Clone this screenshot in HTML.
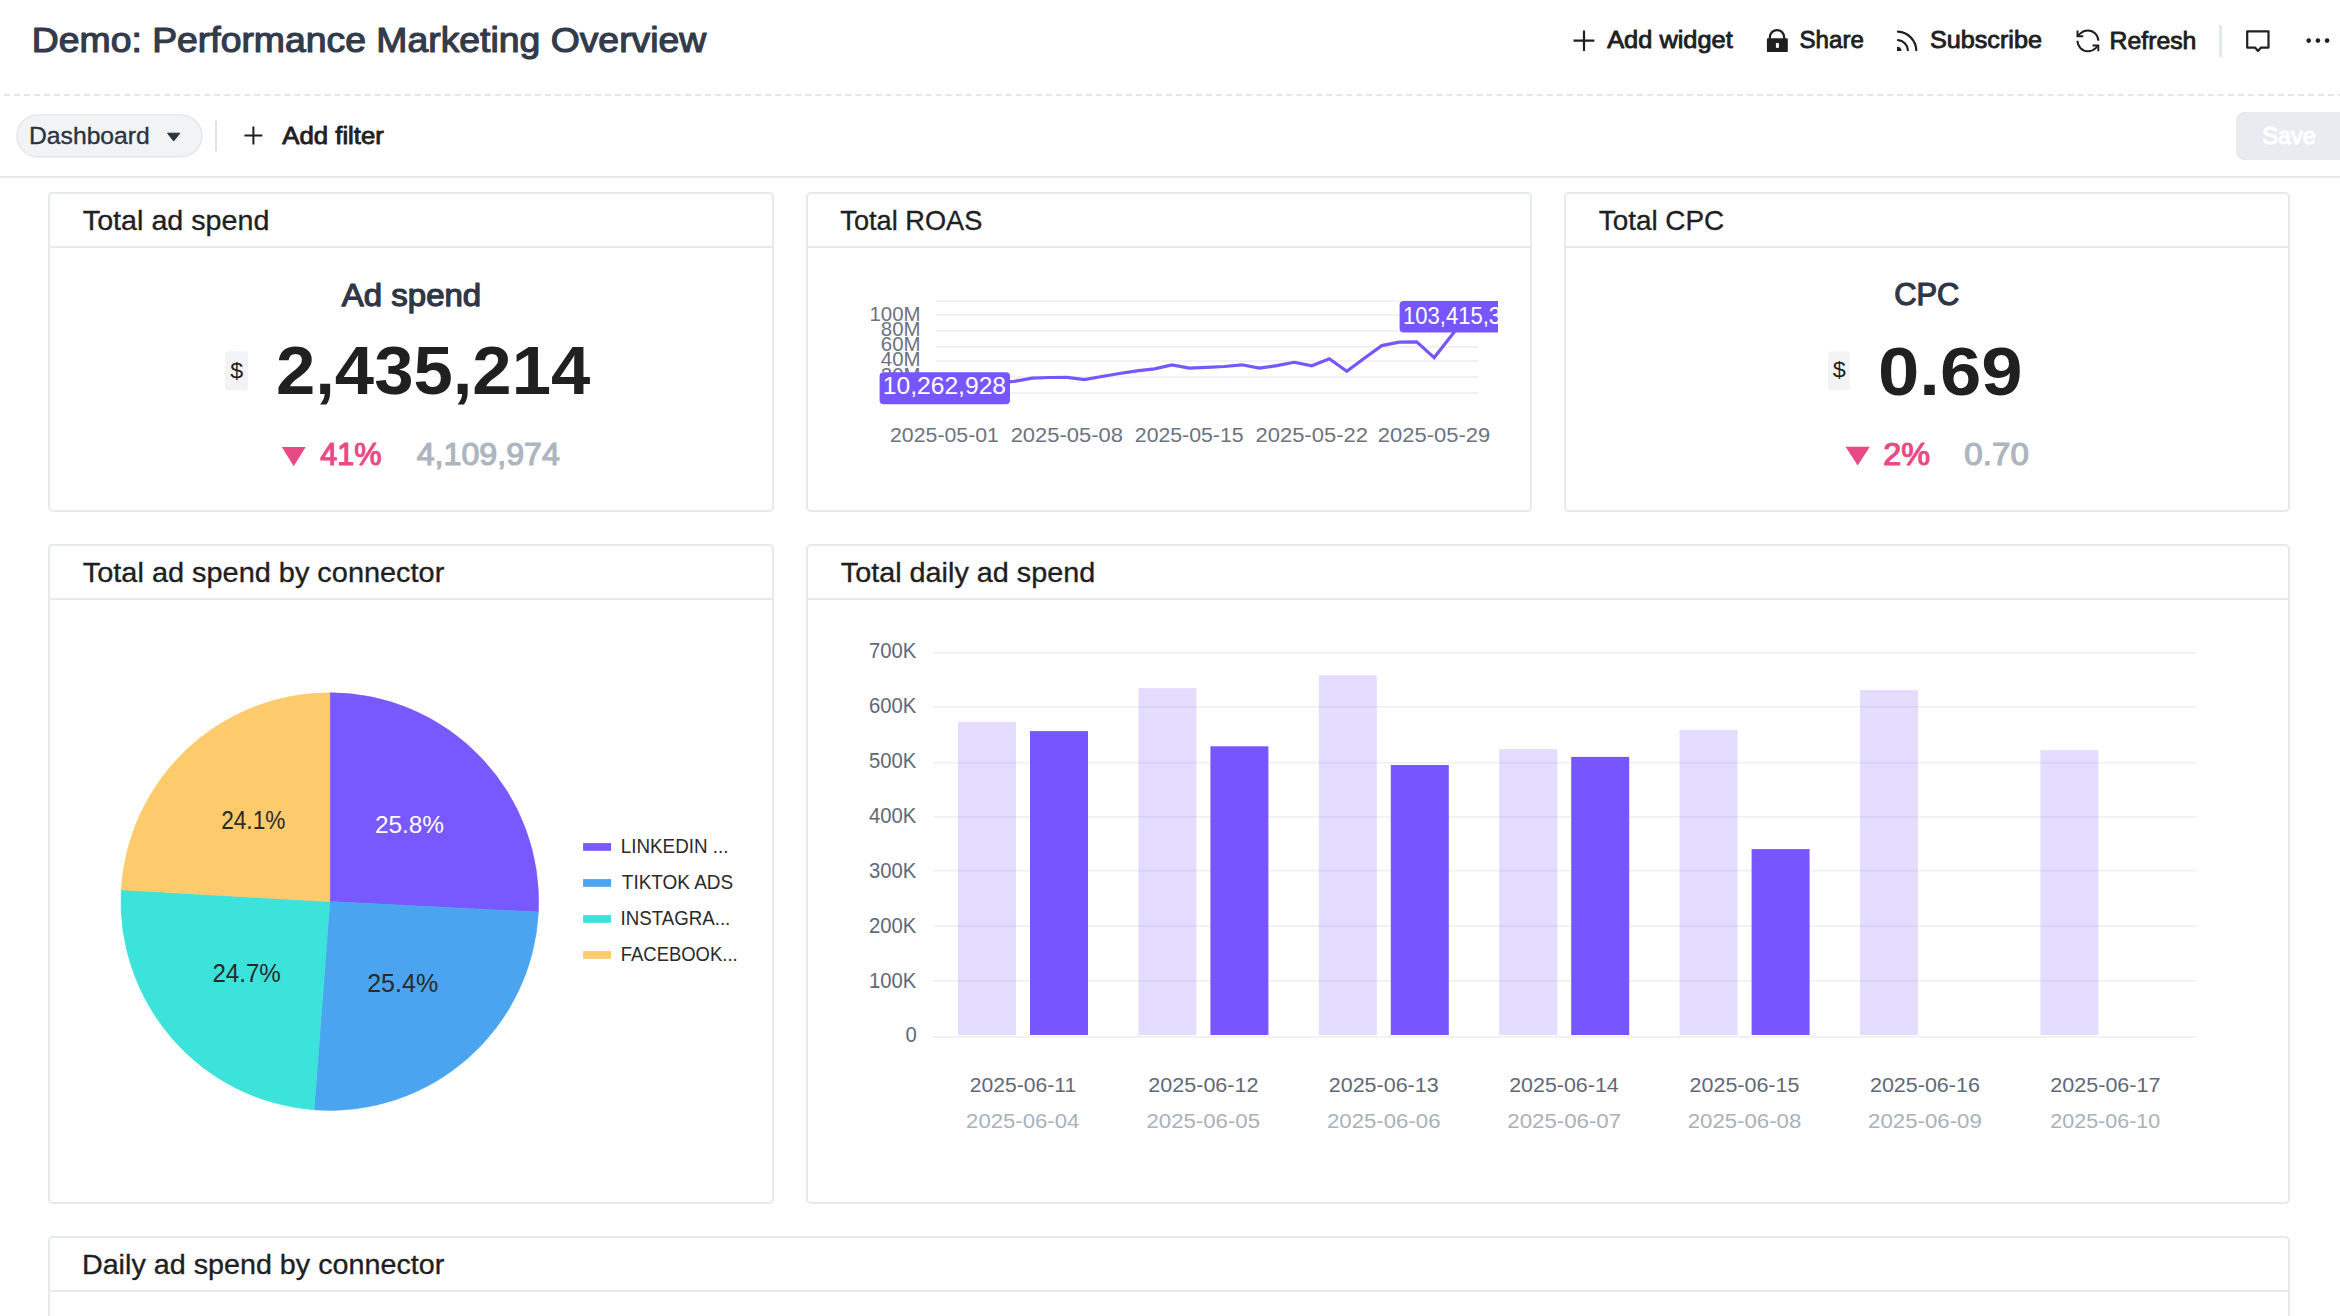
<!DOCTYPE html>
<html><head><meta charset="utf-8"><title>Demo: Performance Marketing Overview</title>
<style>
html,body{margin:0;padding:0;background:#fff;overflow:hidden;}
body{font-family:"Liberation Sans",sans-serif;}
svg{display:block;width:100%;height:auto;}
text{font-family:"Liberation Sans",sans-serif;}
</style></head><body>
<svg width="2340" height="1316" viewBox="0 0 2340 1316">
<text x="31.82" y="52.40" font-size="35.47" textLength="674.47" lengthAdjust="spacingAndGlyphs" fill="#333b4a" stroke="#333b4a" stroke-width="1.2" stroke-linejoin="round">Demo: Performance Marketing Overview</text>
<path d="M1584 30.5V51M1573.5 40.7H1594.4" stroke="#1f1f1f" stroke-width="2.2" fill="none"/>
<text x="1607.16" y="48.28" font-size="23.04" textLength="125.61" lengthAdjust="spacingAndGlyphs" fill="#1f1f1f" stroke="#1f1f1f" stroke-width="0.85" stroke-linejoin="round">Add widget</text>
<path d="M1769.9 38.8V37.1a7.1 7.1 0 0 1 14.2 0V38.8" stroke="#1f1f1f" stroke-width="2.2" fill="none"/>
<rect x="1766.9" y="38.3" width="20.9" height="13.8" rx="1.2" fill="#1f1f1f"/>
<rect x="1775.9" y="43.1" width="3" height="4.7" fill="#fff"/>
<text x="1799.54" y="48.48" font-size="23.62" textLength="64.28" lengthAdjust="spacingAndGlyphs" fill="#1f1f1f" stroke="#1f1f1f" stroke-width="0.85" stroke-linejoin="round">Share</text>
<path d="M1897 51.1V46.7A4.6 4.6 0 0 1 1901.6 51.1Z" fill="#1f1f1f"/>
<path d="M1898 40.1A10.9 10.9 0 0 1 1907.9 50.1M1898 31.7A19.3 19.3 0 0 1 1916.3 50.1" stroke="#1f1f1f" stroke-width="2.2" fill="none" stroke-linecap="round"/>
<text x="1929.99" y="48.28" font-size="23.04" textLength="111.90" lengthAdjust="spacingAndGlyphs" fill="#1f1f1f" stroke="#1f1f1f" stroke-width="0.85" stroke-linejoin="round">Subscribe</text>
<g transform="translate(2074.03 27.0) scale(1.156)" stroke="#1f1f1f" stroke-width="1.69" fill="none" stroke-linecap="butt" stroke-linejoin="miter"><path d="M21 12a9 9 0 0 0-9-9 9.75 9.75 0 0 0-6.74 2.74L3 8"/><path d="M3 3v5h5"/><path d="M3 12a9 9 0 0 0 9 9 9.75 9.75 0 0 0 6.74-2.74L21 16"/><path d="M16 16h5v5"/></g>
<text x="2109.58" y="48.58" font-size="23.47" textLength="86.85" lengthAdjust="spacingAndGlyphs" fill="#1f1f1f" stroke="#1f1f1f" stroke-width="0.85" stroke-linejoin="round">Refresh</text>
<rect x="2219" y="25" width="3" height="32" fill="#e3e8ef"/>
<path d="M2247.2 31.3H2268.5V47.6H2261L2258 51L2255 47.6H2247.2Z" stroke="#1f1f1f" stroke-width="2.2" fill="none" stroke-linejoin="round"/>
<circle cx="2308.7" cy="40.6" r="2.3" fill="#1f1f1f"/>
<circle cx="2317.9" cy="40.6" r="2.3" fill="#1f1f1f"/>
<circle cx="2327.1" cy="40.6" r="2.3" fill="#1f1f1f"/>
<line x1="4" y1="95" x2="2340" y2="95" stroke="#e3e7ec" stroke-width="2" stroke-dasharray="6.01 4.0074"/>
<rect x="16.9" y="114.9" width="185" height="41.8" rx="20.9" fill="#f1f3f5" stroke="#e3e7eb" stroke-width="1.5"/>
<text x="28.94" y="143.92" font-size="23.76" textLength="120.89" lengthAdjust="spacingAndGlyphs" fill="#2b3340" stroke="#2b3340" stroke-width="0.35" stroke-linejoin="round">Dashboard</text>
<path d="M167.5 133.2H179.8L173.65 141Z" fill="#2b3340" stroke="#2b3340" stroke-width="1" stroke-linejoin="round"/>
<rect x="215" y="120.5" width="2" height="31" fill="#dfe4ea"/>
<path d="M253.4 126.5V144.4M244.4 135.5H262.4" stroke="#1f1f1f" stroke-width="2" fill="none"/>
<text x="282.36" y="143.67" font-size="23.04" textLength="101.44" lengthAdjust="spacingAndGlyphs" fill="#1f1f1f" stroke="#1f1f1f" stroke-width="0.85" stroke-linejoin="round">Add filter</text>
<rect x="2236" y="112" width="140" height="48" rx="8" fill="#e8ecf1"/>
<text x="2262.29" y="143.75" font-size="23.84" textLength="53.60" lengthAdjust="spacingAndGlyphs" fill="#ffffff" stroke="#ffffff" stroke-width="1.1" stroke-linejoin="round">Save</text>
<rect x="0" y="176" width="2340" height="2" fill="#e6eaef"/>
<rect x="49" y="193" width="724" height="318" rx="4" fill="#fff" stroke="#e6eaef" stroke-width="2"/>
<rect x="49" y="246" width="724" height="2" fill="#e6eaef"/>
<text x="82.83" y="229.82" font-size="28.56" textLength="186.59" lengthAdjust="spacingAndGlyphs" fill="#1f1f1f" stroke="#1f1f1f" stroke-width="0.35" stroke-linejoin="round">Total ad spend</text>
<rect x="807" y="193" width="724" height="318" rx="4" fill="#fff" stroke="#e6eaef" stroke-width="2"/>
<rect x="807" y="246" width="724" height="2" fill="#e6eaef"/>
<text x="840.36" y="229.82" font-size="28.56" textLength="141.93" lengthAdjust="spacingAndGlyphs" fill="#1f1f1f" stroke="#1f1f1f" stroke-width="0.35" stroke-linejoin="round">Total ROAS</text>
<rect x="1565" y="193" width="724" height="318" rx="4" fill="#fff" stroke="#e6eaef" stroke-width="2"/>
<rect x="1565" y="246" width="724" height="2" fill="#e6eaef"/>
<text x="1598.75" y="229.82" font-size="28.56" textLength="125.47" lengthAdjust="spacingAndGlyphs" fill="#1f1f1f" stroke="#1f1f1f" stroke-width="0.35" stroke-linejoin="round">Total CPC</text>
<rect x="49" y="545" width="724" height="658" rx="4" fill="#fff" stroke="#e6eaef" stroke-width="2"/>
<rect x="49" y="598" width="724" height="2" fill="#e6eaef"/>
<text x="82.82" y="581.83" font-size="28.56" textLength="361.47" lengthAdjust="spacingAndGlyphs" fill="#1f1f1f" stroke="#1f1f1f" stroke-width="0.35" stroke-linejoin="round">Total ad spend by connector</text>
<rect x="807" y="545" width="1482" height="658" rx="4" fill="#fff" stroke="#e6eaef" stroke-width="2"/>
<rect x="807" y="598" width="1482" height="2" fill="#e6eaef"/>
<text x="840.83" y="581.83" font-size="28.56" textLength="254.36" lengthAdjust="spacingAndGlyphs" fill="#1f1f1f" stroke="#1f1f1f" stroke-width="0.35" stroke-linejoin="round">Total daily ad spend</text>
<rect x="49" y="1237" width="2240" height="162" rx="4" fill="#fff" stroke="#e6eaef" stroke-width="2"/>
<rect x="49" y="1290" width="2240" height="2" fill="#e6eaef"/>
<text x="81.91" y="1273.83" font-size="28.56" textLength="362.39" lengthAdjust="spacingAndGlyphs" fill="#1f1f1f" stroke="#1f1f1f" stroke-width="0.35" stroke-linejoin="round">Daily ad spend by connector</text>
<text x="341.84" y="305.57" font-size="31.47" textLength="139.32" lengthAdjust="spacingAndGlyphs" fill="#2f3747" stroke="#2f3747" stroke-width="1.25" stroke-linejoin="round">Ad spend</text>
<rect x="225" y="351.2" width="23" height="39.3" rx="3" fill="#f1f3f5"/>
<text x="230.27" y="377.50" font-size="21.80" textLength="12.91" lengthAdjust="spacingAndGlyphs" fill="#1f1f1f">$</text>
<text x="275.93" y="394.40" font-size="69.04" font-weight="700" textLength="314.33" lengthAdjust="spacingAndGlyphs" fill="#202020">2,435,214</text>
<path d="M281.8 446.9H305.7L293.75 466.2Z" fill="#e84a85"/>
<text x="320.19" y="465.12" font-size="30.60" textLength="61.36" lengthAdjust="spacingAndGlyphs" fill="#e84a85" stroke="#e84a85" stroke-width="1.15" stroke-linejoin="round">41%</text>
<text x="416.65" y="465.12" font-size="30.60" textLength="143.31" lengthAdjust="spacingAndGlyphs" fill="#adb5bf" stroke="#adb5bf" stroke-width="1.15" stroke-linejoin="round">4,109,974</text>
<text x="1894.28" y="305.27" font-size="30.45" textLength="65.09" lengthAdjust="spacingAndGlyphs" fill="#2f3747" stroke="#2f3747" stroke-width="1.25" stroke-linejoin="round">CPC</text>
<rect x="1828" y="351.4" width="21.8" height="38.9" rx="3" fill="#f1f3f5"/>
<text x="1832.77" y="377.30" font-size="21.80" textLength="13.01" lengthAdjust="spacingAndGlyphs" fill="#1f1f1f">$</text>
<text x="1878.03" y="394.50" font-size="69.19" font-weight="700" textLength="144.47" lengthAdjust="spacingAndGlyphs" fill="#202020">0.69</text>
<path d="M1845.6 446.8H1869.8L1857.7 465.6Z" fill="#e84a85"/>
<text x="1883.36" y="465.12" font-size="30.60" textLength="46.79" lengthAdjust="spacingAndGlyphs" fill="#e84a85" stroke="#e84a85" stroke-width="1.15" stroke-linejoin="round">2%</text>
<text x="1964.35" y="465.12" font-size="30.60" textLength="64.46" lengthAdjust="spacingAndGlyphs" fill="#adb5bf" stroke="#adb5bf" stroke-width="1.15" stroke-linejoin="round">0.70</text>
<rect x="936" y="300.1" width="542" height="1.8" fill="#eff1f4"/>
<rect x="936" y="314.1" width="542" height="1.8" fill="#eff1f4"/>
<rect x="936" y="330.1" width="542" height="1.8" fill="#eff1f4"/>
<rect x="936" y="346.1" width="542" height="1.8" fill="#eff1f4"/>
<rect x="936" y="360.1" width="542" height="1.8" fill="#eff1f4"/>
<rect x="936" y="376.1" width="542" height="1.8" fill="#eff1f4"/>
<rect x="936" y="392.1" width="542" height="1.8" fill="#eff1f4"/>
<text x="869.50" y="320.80" font-size="19.48" textLength="51.01" lengthAdjust="spacingAndGlyphs" fill="#6b7280">100M</text>
<text x="880.82" y="336.30" font-size="19.48" textLength="39.67" lengthAdjust="spacingAndGlyphs" fill="#6b7280">80M</text>
<text x="880.82" y="351.40" font-size="19.48" textLength="39.67" lengthAdjust="spacingAndGlyphs" fill="#6b7280">60M</text>
<text x="880.82" y="366.40" font-size="19.48" textLength="39.67" lengthAdjust="spacingAndGlyphs" fill="#6b7280">40M</text>
<text x="880.82" y="381.50" font-size="19.48" textLength="39.67" lengthAdjust="spacingAndGlyphs" fill="#6b7280">20M</text>
<clipPath id="roasclip"><rect x="820" y="250" width="678" height="250"/></clipPath>
<g clip-path="url(#roasclip)">
<polyline points="944.5,385.1 962.0,384.2 979.5,383.3 997.0,382.4 1014.5,381.4 1032.0,378.1 1049.4,377.5 1066.9,377.3 1084.4,379.6 1101.9,376.5 1119.4,373.5 1136.9,370.8 1154.4,368.8 1171.9,365.0 1189.4,368.1 1206.8,367.3 1224.3,366.5 1241.8,364.8 1259.3,368.1 1276.8,365.6 1294.3,362.3 1311.8,365.8 1329.3,358.8 1346.8,371.2 1364.3,358.2 1381.8,345.6 1399.2,342.2 1416.7,341.8 1434.2,357.6 1451.7,335.3 1469.2,313.6" fill="none" stroke="#7856ff" stroke-width="3.2" stroke-linejoin="miter"/>
<rect x="879.6" y="372.3" width="130.4" height="31.9" rx="4" fill="#7856ff"/>
<text x="882.75" y="394.20" font-size="23.26" textLength="123.30" lengthAdjust="spacingAndGlyphs" fill="#fff">10,262,928</text>
<rect x="1399.6" y="301" width="130.4" height="31.6" rx="4" fill="#7856ff"/>
<text x="1402.95" y="324.10" font-size="24.56" textLength="122.69" lengthAdjust="spacingAndGlyphs" fill="#fff">103,415,394</text>
</g>
<text x="890.04" y="441.80" font-size="20.06" textLength="108.88" lengthAdjust="spacingAndGlyphs" fill="#6b7280">2025-05-01</text>
<text x="1010.65" y="441.80" font-size="20.06" textLength="112.34" lengthAdjust="spacingAndGlyphs" fill="#6b7280">2025-05-08</text>
<text x="1134.84" y="441.80" font-size="20.06" textLength="108.72" lengthAdjust="spacingAndGlyphs" fill="#6b7280">2025-05-15</text>
<text x="1255.45" y="441.80" font-size="20.06" textLength="112.51" lengthAdjust="spacingAndGlyphs" fill="#6b7280">2025-05-22</text>
<text x="1377.85" y="441.80" font-size="20.06" textLength="112.40" lengthAdjust="spacingAndGlyphs" fill="#6b7280">2025-05-29</text>
<path d="M329.8 901.6L329.80 692.80A208.8 208.8 0 0 1 538.34 912.09Z" fill="#7858ff" stroke="#7858ff" stroke-width="0.6"/>
<path d="M329.8 901.6L538.34 912.09A208.8 208.8 0 0 1 314.07 1109.81Z" fill="#4ba4f0" stroke="#4ba4f0" stroke-width="0.6"/>
<path d="M329.8 901.6L314.07 1109.81A208.8 208.8 0 0 1 121.33 889.80Z" fill="#3ce3da" stroke="#3ce3da" stroke-width="0.6"/>
<path d="M329.8 901.6L121.33 889.80A208.8 208.8 0 0 1 329.80 692.80Z" fill="#fdca6c" stroke="#fdca6c" stroke-width="0.6"/>
<text x="374.88" y="832.90" font-size="24.42" textLength="69.19" lengthAdjust="spacingAndGlyphs" fill="#ffffff">25.8%</text>
<text x="221.17" y="829.40" font-size="25.87" textLength="64.24" lengthAdjust="spacingAndGlyphs" fill="#2a2a2a">24.1%</text>
<text x="212.39" y="981.80" font-size="24.85" textLength="68.47" lengthAdjust="spacingAndGlyphs" fill="#2a2a2a">24.7%</text>
<text x="367.15" y="992.30" font-size="25.00" textLength="71.04" lengthAdjust="spacingAndGlyphs" fill="#2a2a2a">25.4%</text>
<rect x="583.1" y="843.1" width="28" height="7.7" fill="#7858ff"/>
<text x="620.75" y="853.10" font-size="20.78" textLength="107.77" lengthAdjust="spacingAndGlyphs" fill="#2a2a2a">LINKEDIN ...</text>
<rect x="583.1" y="879.1" width="28" height="7.7" fill="#4ba4f0"/>
<text x="621.87" y="889.10" font-size="20.78" textLength="111.32" lengthAdjust="spacingAndGlyphs" fill="#2a2a2a">TIKTOK ADS</text>
<rect x="583.1" y="915.1" width="28" height="7.7" fill="#3ce3da"/>
<text x="620.57" y="925.10" font-size="20.78" textLength="109.73" lengthAdjust="spacingAndGlyphs" fill="#2a2a2a">INSTAGRA...</text>
<rect x="583.1" y="951.1" width="28" height="7.7" fill="#fdca6c"/>
<text x="620.78" y="961.10" font-size="20.78" textLength="116.88" lengthAdjust="spacingAndGlyphs" fill="#2a2a2a">FACEBOOK...</text>
<rect x="933" y="651.8" width="1263" height="1.8" fill="#eff1f4"/>
<rect x="933" y="705.9" width="1263" height="1.8" fill="#eff1f4"/>
<rect x="933" y="761.8" width="1263" height="1.8" fill="#eff1f4"/>
<rect x="933" y="815.9" width="1263" height="1.8" fill="#eff1f4"/>
<rect x="933" y="869.7" width="1263" height="1.8" fill="#eff1f4"/>
<rect x="933" y="925.0" width="1263" height="1.8" fill="#eff1f4"/>
<rect x="933" y="979.9" width="1263" height="1.8" fill="#eff1f4"/>
<rect x="933" y="1036.1" width="1263" height="1.8" fill="#eff1f4"/>
<text x="868.96" y="658.10" font-size="21.37" textLength="47.31" lengthAdjust="spacingAndGlyphs" fill="#5f6877">700K</text>
<text x="868.96" y="713.00" font-size="21.37" textLength="47.31" lengthAdjust="spacingAndGlyphs" fill="#5f6877">600K</text>
<text x="868.96" y="767.90" font-size="21.37" textLength="47.31" lengthAdjust="spacingAndGlyphs" fill="#5f6877">500K</text>
<text x="868.96" y="822.80" font-size="21.37" textLength="47.31" lengthAdjust="spacingAndGlyphs" fill="#5f6877">400K</text>
<text x="868.96" y="877.70" font-size="21.37" textLength="47.31" lengthAdjust="spacingAndGlyphs" fill="#5f6877">300K</text>
<text x="868.96" y="932.60" font-size="21.37" textLength="47.31" lengthAdjust="spacingAndGlyphs" fill="#5f6877">200K</text>
<text x="868.96" y="987.50" font-size="21.37" textLength="47.31" lengthAdjust="spacingAndGlyphs" fill="#5f6877">100K</text>
<text x="905.52" y="1042.40" font-size="21.37" textLength="11.27" lengthAdjust="spacingAndGlyphs" fill="#5f6877">0</text>
<rect x="958.0" y="721.8" width="58" height="313.2" fill="#7856ff" fill-opacity="0.2"/>
<rect x="1030.0" y="731.1" width="58" height="303.9" fill="#7856ff"/>
<rect x="1138.4" y="688.2" width="58" height="346.8" fill="#7856ff" fill-opacity="0.2"/>
<rect x="1210.4" y="746.3" width="58" height="288.7" fill="#7856ff"/>
<rect x="1318.8" y="675.2" width="58" height="359.8" fill="#7856ff" fill-opacity="0.2"/>
<rect x="1390.8" y="765.0" width="58" height="270.0" fill="#7856ff"/>
<rect x="1499.2" y="749.1" width="58" height="285.9" fill="#7856ff" fill-opacity="0.2"/>
<rect x="1571.2" y="756.9" width="58" height="278.1" fill="#7856ff"/>
<rect x="1679.6" y="729.8" width="58" height="305.2" fill="#7856ff" fill-opacity="0.2"/>
<rect x="1751.6" y="849.1" width="58" height="185.9" fill="#7856ff"/>
<rect x="1860.0" y="690.0" width="58" height="345.0" fill="#7856ff" fill-opacity="0.2"/>
<rect x="2040.4" y="750.1" width="58" height="284.9" fill="#7856ff" fill-opacity="0.2"/>
<text x="969.79" y="1092.00" font-size="20.35" textLength="106.38" lengthAdjust="spacingAndGlyphs" fill="#5f6877">2025-06-11</text>
<text x="966.14" y="1128.00" font-size="20.49" textLength="113.22" lengthAdjust="spacingAndGlyphs" fill="#a9b1bb">2025-06-04</text>
<text x="1148.37" y="1092.00" font-size="20.35" textLength="110.06" lengthAdjust="spacingAndGlyphs" fill="#5f6877">2025-06-12</text>
<text x="1146.54" y="1128.00" font-size="20.49" textLength="113.51" lengthAdjust="spacingAndGlyphs" fill="#a9b1bb">2025-06-05</text>
<text x="1328.78" y="1092.00" font-size="20.35" textLength="109.90" lengthAdjust="spacingAndGlyphs" fill="#5f6877">2025-06-13</text>
<text x="1326.94" y="1128.00" font-size="20.49" textLength="113.56" lengthAdjust="spacingAndGlyphs" fill="#a9b1bb">2025-06-06</text>
<text x="1509.18" y="1092.00" font-size="20.35" textLength="109.57" lengthAdjust="spacingAndGlyphs" fill="#5f6877">2025-06-14</text>
<text x="1507.34" y="1128.00" font-size="20.49" textLength="113.73" lengthAdjust="spacingAndGlyphs" fill="#a9b1bb">2025-06-07</text>
<text x="1689.58" y="1092.00" font-size="20.35" textLength="109.84" lengthAdjust="spacingAndGlyphs" fill="#5f6877">2025-06-15</text>
<text x="1687.74" y="1128.00" font-size="20.49" textLength="113.56" lengthAdjust="spacingAndGlyphs" fill="#a9b1bb">2025-06-08</text>
<text x="1869.98" y="1092.00" font-size="20.35" textLength="109.90" lengthAdjust="spacingAndGlyphs" fill="#5f6877">2025-06-16</text>
<text x="1868.14" y="1128.00" font-size="20.49" textLength="113.62" lengthAdjust="spacingAndGlyphs" fill="#a9b1bb">2025-06-09</text>
<text x="2050.37" y="1092.00" font-size="20.35" textLength="110.06" lengthAdjust="spacingAndGlyphs" fill="#5f6877">2025-06-17</text>
<text x="2050.38" y="1128.00" font-size="20.49" textLength="109.79" lengthAdjust="spacingAndGlyphs" fill="#a9b1bb">2025-06-10</text>
</svg>
</body></html>
